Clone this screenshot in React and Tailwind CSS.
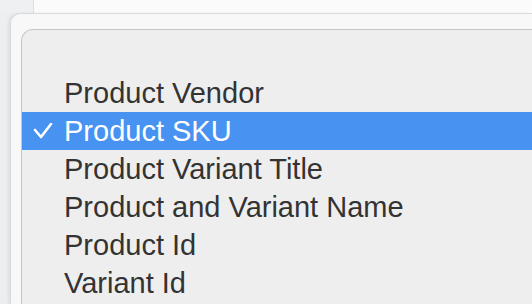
export default function App() {
    const items = [
        "Product Vendor",
        "Product SKU",
        "Product Variant Title",
        "Product and Variant Name",
        "Product Id",
        "Variant Id",
    ];
    const selected = 1;
    return (
        <div className="w-[532px] h-[304px] overflow-hidden bg-[#eceef0] flex flex-col font-['Liberation_Sans',Arial,sans-serif]">
            <div className="flex h-[13px] shrink-0">
                <div className="w-[33px] bg-[#eef0f2]" />
                <div className="flex-1 bg-[#fbfbfb] border-l border-[#dcdfe3]" />
            </div>
            <div className="flex-1 ml-[10px] bg-[#f8f8f8] rounded-tl-[10px] border-t border-l border-[#d6dbe0] shadow-[-2px_0_3px_rgba(0,0,0,0.06)] pt-[15px] pl-[10px] flex flex-col">
                <div className="flex-1 bg-[#eeeeef] rounded-tl-[12px] border-t border-l border-[#c6c6c6] pt-[44px]">
                    {items.map((item, i) => (
                        <div
                            key={item}
                            className={
                                i === selected
                                    ? "relative h-[38px] leading-[38px] pl-[42px] text-[29px] bg-[#4892f2] text-white"
                                    : "relative h-[38px] leading-[38px] pl-[42px] text-[29px] text-[#333333]"
                            }
                        >
                            {i === selected && (
                                <svg
                                    className="absolute left-[11px] top-[11px]"
                                    width="20"
                                    height="16"
                                    viewBox="0 0 20 16"
                                >
                                    <polyline
                                        points="2,7 8,14 18,1"
                                        fill="none"
                                        stroke="white"
                                        strokeWidth="2.6"
                                        strokeLinecap="round"
                                        strokeLinejoin="round"
                                    />
                                </svg>
                            )}
                            {item}
                        </div>
                    ))}
                </div>
            </div>
        </div>
    );
}
